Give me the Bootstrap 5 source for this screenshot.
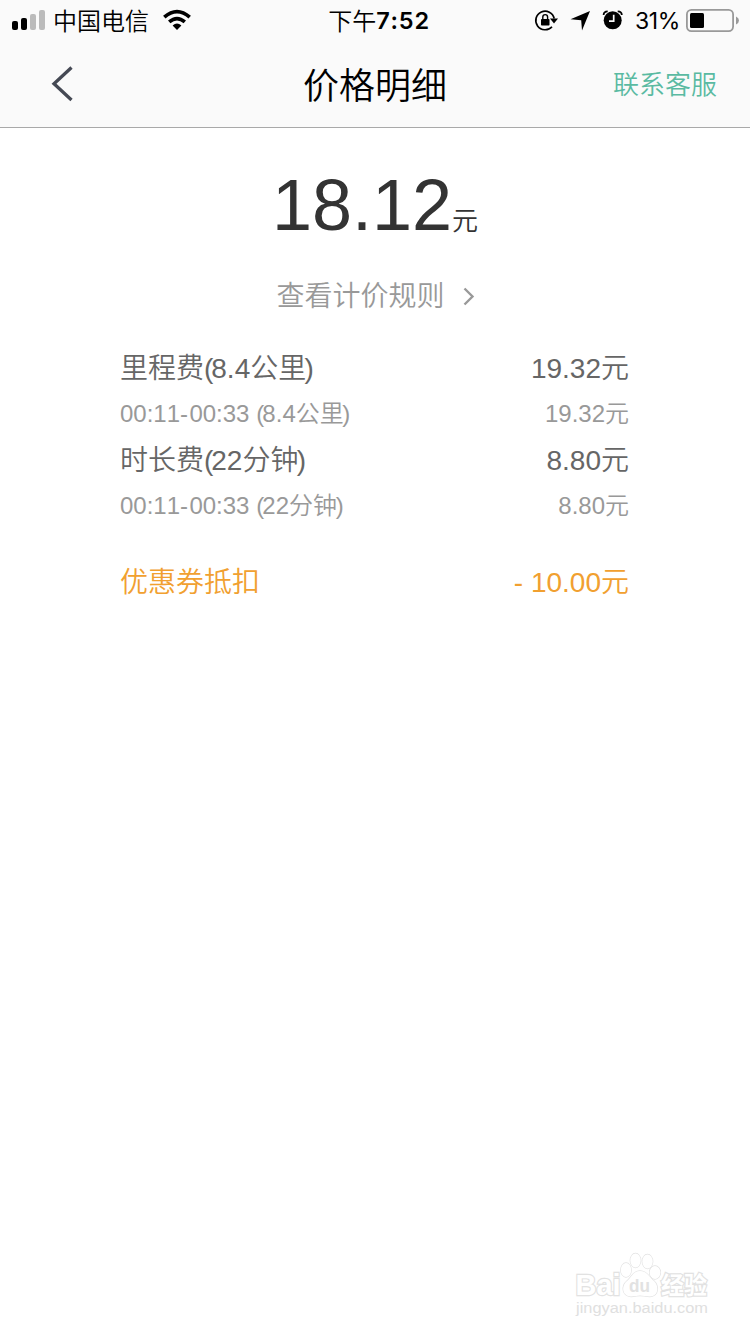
<!DOCTYPE html>
<html lang="zh-CN">
<head>
<meta charset="utf-8">
<meta name="viewport" content="width=device-width, initial-scale=1">
<title>价格明细</title>
<link href="https://cdn.jsdelivr.net/npm/bootstrap@5.3.0/dist/css/bootstrap.min.css" rel="stylesheet">
<style>
  body { font-family: "Liberation Sans", "Noto Sans CJK SC", sans-serif; font-weight: 350; font-kerning: none; color: #333; background: #fff; }
  .top-area { background: #fafafa; border-bottom: 1px solid #a9a9a9; height: 128px; }
  .status-bar { height: 40px; color: #000; font-size: 24px; line-height: 40px; }
  .status-bar svg, .title-bar svg { display: block; flex: none; }
  .status-bar .han { padding-top: 3px; }
  .side { flex: 1 1 0; }
  .latin { font-family: Inter, "Liberation Sans", sans-serif; }
  .time { padding-left: 8px; }
  .clock { font-weight: 600; font-size: 23.5px; letter-spacing: .8px; padding-top: 1px; }
  .percent { font-size: 23px; letter-spacing: -.4px; font-weight: 400; padding-top: 1px; }
  .title-bar { height: 87px; line-height: 87px; }
  .page-title { font-size: 36px; line-height: 93px; color: #000; font-weight: 350; }
  .service { font-size: 26px; line-height: 91px; color: #5abaa2; margin-right: 33px; }
  .total { font-size: 72px; line-height: 80px; margin-top: 37px; }
  .total .unit { font-size: 26px; }
  .rules { font-size: 28px; line-height: 40px; color: #999; margin-top: 16px; gap: 18px; padding-left: 1px; }
  .bill { width: 509px; margin-top: 29px; margin-left: 120px; }
  .bill .line { height: 46px; line-height: 46px; font-size: 28px; color: #666; }
  .bill .line.sub { font-size: 24px; line-height: 44px; color: #999; }
  .bill .line.coupon { color: #f1a030; margin-top: 30px; }
  .paren { letter-spacing: -.074em; }
  .paren.close-paren { margin-left: -.06em; }
  .dash { letter-spacing: .056em; }
  .watermark { margin-right: 38px; margin-bottom: 14px; }
</style>
</head>
<body>
<div class="d-flex flex-column vh-100 overflow-hidden">
  <header class="top-area">
    <div class="status-bar d-flex align-items-center">
      <div class="side d-flex align-items-center">
        <svg width="53" height="40" viewBox="0 0 53 40"><rect x="12" y="21" width="6" height="9" rx="2"/><rect x="21" y="18" width="6" height="12" rx="2"/><g fill="#bbb"><rect x="30" y="14" width="6" height="16" rx="2"/><rect x="39" y="10" width="6" height="20" rx="2"/></g></svg>
        <span class="han">中国电信</span>
        <svg width="44" height="40" viewBox="149 0 44 40" fill="none" stroke="#000" stroke-width="3.7"><path d="M164.3 17.1Q177 6 189.700 17.1M169.200 21.900Q177 15.300 184.800 21.900"/><path d="M172.600 25.500Q177 21.700 181.400 25.500L177 29.900Z" fill="#000" stroke="none"/></svg>
      </div>
      <div class="time d-flex align-items-center"><span class="han">下午</span><span class="latin clock">7:52</span></div>
      <div class="side d-flex align-items-center justify-content-end">
        <svg width="101" height="40" viewBox="534 0 101 40">
          <path d="M552 26.700A9.300 9.300 0 1 1 554.200 18.500" fill="none" stroke="#000" stroke-width="1.700"/>
          <path d="M550 18.500H558L554 23.500Z"/>
          <rect x="541" y="19" width="8.500" height="6.600" rx=".8"/><path d="M542.800 19.500V17a2.400 2.400 0 0 1 4.800 0V19.500" fill="none" stroke="#000" stroke-width="1.400"/>
          <path d="M590 11L582 30.500L581.200 20.300L570.500 19.300Z"/>
          <circle cx="612.700" cy="20.300" r="9"/><path d="M613.700 14.800V21.200H609" fill="none" stroke="#fafafa" stroke-width="1.700"/>
          <path d="M603.600 15Q603.700 11.500 607.700 11.400M617.700 11.400Q621.700 11.500 621.800 15" fill="none" stroke="#000" stroke-width="1.800"/>
        </svg>
        <span class="latin percent">31%</span>
        <svg width="70" height="40" viewBox="680 0 70 40"><rect x="686.900" y="9.900" width="46.200" height="21.200" rx="4.500" fill="none" stroke="#999" stroke-width="1.800"/><rect x="690" y="13" width="14" height="15" rx="1.500"/><path d="M736 16.500Q739 18 739 20.500T736 24.500Z" fill="#999"/></svg>
      </div>
    </div>
    <div class="title-bar d-flex">
      <div class="side"><svg width="90" height="87" viewBox="0 40 90 87"><path d="M71.500 67.500L54 83.700L71.500 100" fill="none" stroke="#454954" stroke-width="3.300"/></svg></div>
      <h1 class="page-title m-0">价格明细</h1>
      <div class="side text-end"><span class="service d-inline-block">联系客服</span></div>
    </div>
  </header>
  <main>
    <div class="total text-center">18.12<span class="unit">元</span></div>
    <div class="rules d-flex justify-content-center align-items-center">
      <span>查看计价规则</span>
      <svg width="12" height="20" viewBox="0 0 12 20" fill="none" stroke="#999" stroke-width="2.400"><path d="M1.500 1.500L9.500 9.500L1.500 17.500"/></svg>
    </div>
    <div class="bill">
      <div class="line d-flex justify-content-between"><span>里程费<span class="paren">(</span>8.4公里<span class="paren close-paren">)</span></span><span>19.32元</span></div>
      <div class="line sub d-flex justify-content-between"><span>00:11<span class="dash">-</span>00:33 <span class="paren">(</span>8.4公里<span class="paren close-paren">)</span></span><span>19.32元</span></div>
      <div class="line d-flex justify-content-between"><span>时长费<span class="paren">(</span>22分钟<span class="paren close-paren">)</span></span><span>8.80元</span></div>
      <div class="line sub d-flex justify-content-between"><span>00:11<span class="dash">-</span>00:33 <span class="paren">(</span>22分钟<span class="paren close-paren">)</span></span><span>8.80元</span></div>
      <div class="line coupon d-flex justify-content-between"><span>优惠券抵扣</span><span>- 10.00元</span></div>
    </div>
  </main>
  <footer class="watermark mt-auto ms-auto">
    <svg class="d-block" width="140" height="70" viewBox="572 1250 140 70" fill="#fff" stroke="#e2e2e2" stroke-width="1.300" paint-order="stroke">
      <g stroke-width="2.400" font-weight="700">
        <text x="575.500" y="1295" font-size="30" textLength="45" lengthAdjust="spacingAndGlyphs">Bai</text>
        <text x="661" y="1294" font-size="24" textLength="46" lengthAdjust="spacingAndGlyphs">经验</text>
      </g>
      <ellipse cx="626" cy="1270" rx="5.200" ry="7"/><ellipse cx="635.500" cy="1260.500" rx="5.200" ry="7"/><ellipse cx="647.500" cy="1261.500" rx="5.200" ry="7"/><ellipse cx="655" cy="1272.500" rx="5.400" ry="6.500"/>
      <path d="M640 1271C633 1271 632 1277 627 1281C621 1286 622 1296 631 1296.500C635 1296.500 637 1295.500 640 1295.500S646 1296.500 650 1296.500C659 1296 659 1286 654 1281C649 1277 647 1271 640 1271Z"/>
      <text x="629" y="1292" font-size="18" font-weight="700" fill="#e2e2e2" stroke="none" textLength="21" lengthAdjust="spacingAndGlyphs">du</text>
      <text x="576" y="1313" font-size="15.500" fill="#e0e0e0" stroke="none" textLength="132" lengthAdjust="spacingAndGlyphs">jingyan.baidu.com</text>
    </svg>
  </footer>
</div>
<script src="https://cdn.jsdelivr.net/npm/bootstrap@5.3.0/dist/js/bootstrap.bundle.min.js"></script>
</body>
</html>
